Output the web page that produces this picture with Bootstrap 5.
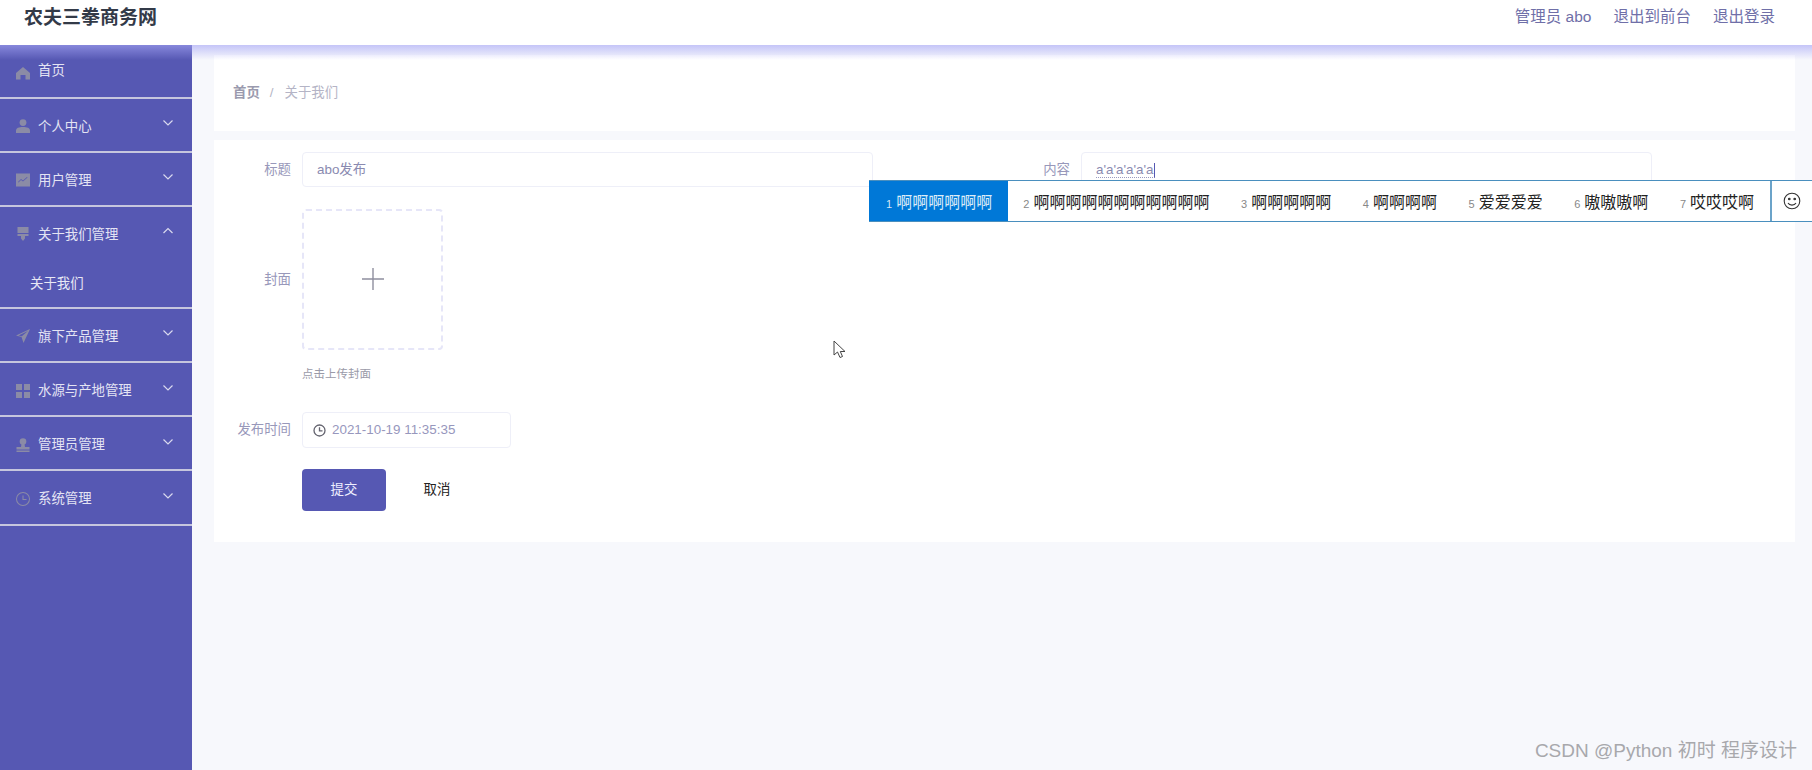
<!DOCTYPE html>
<html lang="zh-CN">
<head>
<meta charset="utf-8">
<title>农夫三拳商务网</title>
<link href="https://cdn.jsdelivr.net/npm/bootstrap@5.3.0/dist/css/bootstrap.min.css" rel="stylesheet">
<style>
html,body{height:770px;overflow:hidden}
body{background:#f7f8fc;font-family:"Liberation Sans","Noto Sans CJK SC",sans-serif;font-size:13.4px;color:#8a8ab0}
.top-bar{height:45px;background:#fff;position:relative;padding:0 37px 0 24px}
.top-bar::after{content:"";position:absolute;left:0;right:0;top:45px;height:15px;background:linear-gradient(rgba(165,165,245,.62),rgba(165,165,245,0));z-index:5}
.site-name{font-size:19px;font-weight:700;color:#333a48;line-height:36px}
.top-link{font-size:15.5px;color:#6f6fa8;margin-left:22px;line-height:34px}
.shell{height:725px}
.side-menu{width:192px;background:#5658b3;flex:none}
.side-row{height:54.2px;padding:0 18px 0 16px;color:#e4e4f3;border-bottom:2px solid #c6c6de}
.side-row:first-child{height:53.5px;padding-top:1px}
.side-row.open{height:52px;border-bottom:0}
.side-sub{height:50px;padding:3px 0 0 30px;color:#e8e8f5;border-bottom:2px solid #c6c6de}
.side-ico{width:14px;height:14px;margin-right:8px;margin-top:3px;flex:none;fill:#8b8ba6}
.chev{width:12px;height:8px;margin-top:-3px;fill:none;stroke:#d9d9ee;stroke-width:1.2}
.side-label{margin-top:4px}
.content-pane{padding:10px 17px 0 22px;min-width:0}
.crumb-card{height:76px;background:#fff;padding:0 19px}
.crumb-card b{font-weight:700;color:#9a9aae}
.crumb-sep{color:#b5b5c5;margin:0 11px 0 10px}
.crumb-now{color:#b4b4c6}
.form-card{height:402px;margin-top:9px;background:#fff;padding:12px 15px 0 8px}
.col-half{width:779px;flex:none}
.form-lab{width:80px;padding:1px 11px 0 0;text-align:right;flex:none;color:#9898ba}
.fake-input{width:571px;height:35px;border:1px solid #eeeff8;border-radius:4px;padding:2px 14px 0;color:#8a8ab0;background:#fff}
.caret-text{border-bottom:1px dotted #9a9ac0;line-height:14px;border-right:1px solid #5658b3;padding-right:1px}
.upload-row{margin-top:22px}
.upload-box{width:141px;height:141px;border:2px dashed #e6e6f8;border-radius:4px}
.upload-box svg{width:22px;height:22px;margin-top:-2px;stroke:#8f8f9f;stroke-width:1.4}
.upload-hint{margin:16px 0 0 80px;font-size:11.5px;line-height:16px;color:#9a9aa8}
.date-row{margin-top:30px}
.date-input{width:209px;height:36px;border:1px solid #eeeff8;border-radius:4px;padding:0 10px;color:#9797bd}
.date-input svg{width:13px;height:13px;margin-right:6px;fill:none;stroke:#63636e;stroke-width:1.3}
.btn-row{margin:21px 0 0 80px}
.btn-save{width:84px;height:42px;background:#5658b3;border:0;border-radius:4px;color:#eef;font-size:13.4px;padding:0}
.btn-save:hover{background:#5658b3;color:#eef}
.btn-undo{width:84px;height:42px;background:transparent;border:0;color:#222;font-size:13.4px;padding:0;margin-left:9px}
.ime-bar{position:absolute;left:869px;top:180px;width:943px;height:42px;background:#fff;border-top:1px solid #4a8fbe;border-bottom:1px solid #4a8fbe;z-index:6;color:#222;font-family:"Noto Sans CJK SC",sans-serif;font-size:16px;white-space:nowrap}
.ime-cand{padding:0 15.8px;line-height:40px;height:40px;flex:none}
.ime-cand:nth-last-child(3){padding-right:10px}
.ime-cand i{font-style:normal;font-size:11px;color:#888;margin-right:4px;font-family:"Liberation Sans",sans-serif}
.ime-cand.on{background:#0078d7;color:#dcecf8;width:138.5px;padding-left:17px}
.ime-cand.on i{color:#d5e6f5}
.ime-gap{flex:1}
.ime-face{width:42px;height:40px;flex:none;border-left:2px solid #6ba3c9}
.ime-face svg{width:18px;height:18px;fill:none;stroke:#333;stroke-width:1.1}
.pointer-mark{position:absolute;left:833px;top:340px;width:13px;height:20px;z-index:6}
.mark-csdn{position:absolute;right:15px;bottom:7px;font-size:19px;color:#a8a8ac;font-family:"Liberation Sans","Noto Sans CJK SC",sans-serif;line-height:24px}
</style>
</head>
<body>
<div class="top-bar d-flex align-items-start justify-content-between">
  <div class="site-name">农夫三拳商务网</div>
  <div class="d-flex">
    <span class="top-link">管理员 abo</span>
    <span class="top-link">退出到前台</span>
    <span class="top-link">退出登录</span>
  </div>
</div>
<div class="shell d-flex">
  <nav class="side-menu">
    <div class="side-row d-flex align-items-center"><svg class="side-ico" viewBox="0 0 14 14"><path d="M7 1 L14 7 V13.5 H9.5 V9 H4.5 V13.5 H0 V7 Z"/></svg><span>首页</span></div>
    <div class="side-row d-flex align-items-center"><svg class="side-ico" viewBox="0 0 14 14"><circle cx="7" cy="3.6" r="3.4"/><path d="M0 14 V11.5 C0 9 3 8 7 8 C11 8 14 9 14 11.5 V14 Z"/></svg><span class="side-label flex-grow-1">个人中心</span><svg class="chev" viewBox="0 0 12 8"><path d="M1.5 1.5 L6 6 L10.500 1.500"/></svg></div>
    <div class="side-row d-flex align-items-center"><svg class="side-ico" viewBox="0 0 14 14"><path fill-rule="evenodd" d="M0 .5 H14 V13.500 H0 Z M2.500 9.500 L5 7 L7 8.500 L11.500 4.500 L11 4 L7 7.500 L5 6 L2 9 Z"/></svg><span class="side-label flex-grow-1">用户管理</span><svg class="chev" viewBox="0 0 12 8"><path d="M1.5 1.5 L6 6 L10.500 1.500"/></svg></div>
    <div class="side-row open d-flex align-items-center"><svg class="side-ico" viewBox="0 0 14 14"><path d="M1.500 0 H12.500 V6 H1.500 Z M1.500 7 H12.500 V9 H9 V11.500 L7 14 L5 11.500 V9 H1.500 Z"/></svg><span class="side-label flex-grow-1">关于我们管理</span><svg class="chev" viewBox="0 0 12 8"><path d="M1.5 6 L6 1.5 L10.500 6"/></svg></div>
    <div class="side-sub d-flex align-items-center">关于我们</div>
    <div class="side-row d-flex align-items-center"><svg class="side-ico" viewBox="0 0 14 14"><path d="M14 0 L0 6.500 L5.500 8 L7.500 14 Z M12 2 L5.800 7.200 L2.500 6.400 Z"/></svg><span class="side-label flex-grow-1">旗下产品管理</span><svg class="chev" viewBox="0 0 12 8"><path d="M1.5 1.5 L6 6 L10.500 1.500"/></svg></div>
    <div class="side-row d-flex align-items-center"><svg class="side-ico" viewBox="0 0 14 14"><path d="M0 0 H6 V6 H0 Z M8 0 H14 V6 H8 Z M0 8 H6 V14 H0 Z M8 8 H14 V14 H8 Z"/></svg><span class="side-label flex-grow-1">水源与产地管理</span><svg class="chev" viewBox="0 0 12 8"><path d="M1.5 1.5 L6 6 L10.500 1.500"/></svg></div>
    <div class="side-row d-flex align-items-center"><svg class="side-ico" viewBox="0 0 14 14"><circle cx="7" cy="3.500" r="3.300"/><path d="M5.500 6 H8.500 L9 9 H13.500 V11.500 H.5 V9 H5 Z M.5 12.500 H13.500 V14 H.5 Z"/></svg><span class="side-label flex-grow-1">管理员管理</span><svg class="chev" viewBox="0 0 12 8"><path d="M1.5 1.5 L6 6 L10.500 1.500"/></svg></div>
    <div class="side-row d-flex align-items-center"><svg class="side-ico" viewBox="0 0 14 14"><path fill-rule="evenodd" d="M7 0 A7 7 0 1 1 7 14 A7 7 0 1 1 7 0 Z M7 1 A6 6 0 1 0 7 13 A6 6 0 1 0 7 1 Z M6.500 3.500 H7.500 V7 H10.500 V8 H6.500 Z"/></svg><span class="side-label flex-grow-1">系统管理</span><svg class="chev" viewBox="0 0 12 8"><path d="M1.5 1.5 L6 6 L10.500 1.500"/></svg></div>
  </nav>
  <main class="content-pane flex-grow-1">
    <div class="crumb-card d-flex align-items-center">
      <b>首页</b><span class="crumb-sep">/</span><span class="crumb-now">关于我们</span>
    </div>
    <div class="form-card">
      <div class="d-flex">
        <div class="col-half d-flex align-items-center"><div class="form-lab">标题</div><div class="fake-input d-flex align-items-center">abo发布</div></div>
        <div class="col-half d-flex align-items-center"><div class="form-lab">内容</div><div class="fake-input d-flex align-items-center"><span class="caret-text">a'a'a'a'a'a</span></div></div>
      </div>
      <div class="upload-row d-flex align-items-center">
        <div class="form-lab">封面</div>
        <div class="upload-box d-flex align-items-center justify-content-center"><svg viewBox="0 0 22 22"><path d="M11 0 V22 M0 11 H22"/></svg></div>
      </div>
      <div class="upload-hint">点击上传封面</div>
      <div class="date-row d-flex align-items-center">
        <div class="form-lab">发布时间</div>
        <div class="date-input d-flex align-items-center"><svg viewBox="0 0 13 13"><circle cx="6.500" cy="6.500" r="5.500"/><path d="M6.500 3.200 V6.800 H9.500"/></svg>2021-10-19 11:35:35</div>
      </div>
      <div class="btn-row d-flex">
        <button type="button" class="btn btn-save">提交</button>
        <button type="button" class="btn btn-undo">取消</button>
      </div>
    </div>
  </main>
</div>
<div class="ime-bar d-flex">
  <div class="ime-cand on"><i>1</i>啊啊啊啊啊啊</div>
  <div class="ime-cand"><i>2</i>啊啊啊啊啊啊啊啊啊啊啊</div>
  <div class="ime-cand"><i>3</i>啊啊啊啊啊</div>
  <div class="ime-cand"><i>4</i>啊啊啊啊</div>
  <div class="ime-cand"><i>5</i>爱爱爱爱</div>
  <div class="ime-cand"><i>6</i>嗷嗷嗷啊</div>
  <div class="ime-cand"><i>7</i>哎哎哎啊</div>
  <div class="ime-gap"></div>
  <div class="ime-face d-flex align-items-center justify-content-center"><svg viewBox="0 0 18 18"><circle cx="9" cy="9" r="7.800"/><circle cx="6.300" cy="7" r=".8" fill="#333"/><circle cx="11.700" cy="7" r=".8" fill="#333"/><path d="M5 11 C6.500 13.800 11.500 13.800 13 11"/></svg></div>
</div>
<svg class="pointer-mark" viewBox="0 0 13 20"><path d="M1 1 V15 L4.500 12 L7 17.500 L9.500 16.500 L7.300 11.500 H12 Z" fill="#fff" stroke="#444" stroke-width="1"/></svg>
<div class="mark-csdn">CSDN @Python 初时 程序设计</div>
<script src="https://cdn.jsdelivr.net/npm/bootstrap@5.3.0/dist/js/bootstrap.bundle.min.js"></script>
</body>
</html>
